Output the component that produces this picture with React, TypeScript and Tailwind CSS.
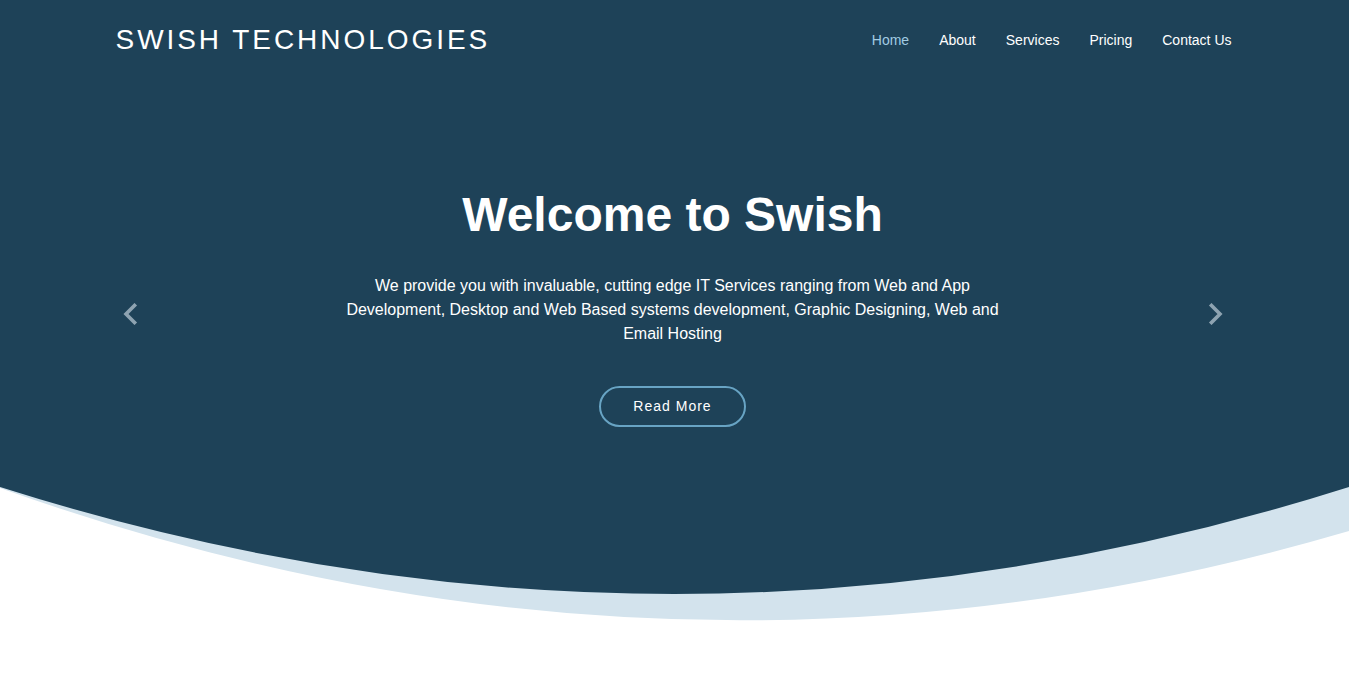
import React from "react";

const navItems = ["Home", "About", "Services", "Pricing", "Contact Us"];

function Chevron({ dir }: { dir: "left" | "right" }) {
  return (
    <svg width="16" height="22" viewBox="0 0 16 22" fill="none" className="shrink-0">
      <path
        d={dir === "left" ? "M12.5 2.5 L4 11 L12.5 19.5" : "M3.5 2.5 L12 11 L3.5 19.5"}
        stroke="#8ea3b1"
        strokeWidth="3.6"
        strokeLinecap="square"
        strokeLinejoin="miter"
      />
    </svg>
  );
}

function Header() {
  return (
    <header className="h-20 w-full">
      <div className="max-w-[1140px] mx-auto pl-[11px] pr-[13px] h-full flex items-center justify-between">
        <h1 className="text-[28px] leading-none font-normal tracking-[2.95px] text-white">
          SWISH TECHNOLOGIES
        </h1>
        <nav className="flex items-center">
          {navItems.map((item, i) => (
            <a
              key={item}
              href="#"
              className={`text-sm leading-none ${i === 0 ? "text-[#a2cce3]" : "text-white"} ${
                i === 0 ? "" : "ml-[30px]"
              }`}
            >
              {item}
            </a>
          ))}
        </nav>
      </div>
    </header>
  );
}

function Hero() {
  return (
    <section className="w-full">
      <div className="max-w-[1140px] mx-auto px-[11px] h-[407px]">
        <div className="flex items-center justify-between h-full pl-[6px] pr-[10px]">
          <button className="mt-[60px]" aria-label="Previous">
            <Chevron dir="left" />
          </button>
          <div className="flex flex-col items-center text-center pt-[106px] pb-[60px] h-full">
            <h2 className="text-[48px] leading-[58px] font-bold text-white">Welcome to Swish</h2>
            <p className="mt-[30px] max-w-[660px] text-base leading-6 text-white">
              We provide you with invaluable, cutting edge IT Services ranging from Web and App
              Development, Desktop and Web Based systems development, Graphic Designing, Web and
              Email Hosting
            </p>
            <a
              href="#"
              className="mt-[40px] rounded-full border-2 border-[#68a4c4] px-8 py-[10px] text-sm leading-[17px] font-medium tracking-[1px] text-white"
            >
              Read More
            </a>
          </div>
          <button className="mt-[60px]" aria-label="Next">
            <Chevron dir="right" />
          </button>
        </div>
      </div>
    </section>
  );
}

function Curve() {
  return (
    <svg
      className="block w-full h-[140px]"
      viewBox="0 0 1349 140"
      preserveAspectRatio="none"
    >
      <path d="M0 0 L0 1 Q674 242 1349 44 L1349 0 Z" fill="#d3e3ed" />
      <path d="M0 0 Q674 214 1349 0 Z" fill="#1e4258" />
    </svg>
  );
}

export default function App() {
  return (
    <div
      className="min-h-screen bg-white"
      style={{ fontFamily: '"Liberation Sans", Arial, sans-serif' }}
    >
      <div className="bg-[#1e4258]">
        <Header />
        <Hero />
      </div>
      <Curve />
    </div>
  );
}
